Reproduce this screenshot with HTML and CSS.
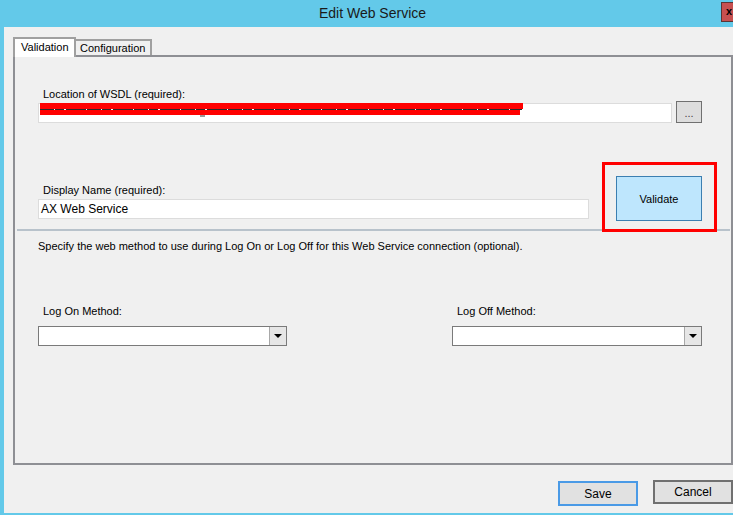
FILE: index.html
```html
<!DOCTYPE html>
<html lang="en">
<head>
    <meta charset="UTF-8">
    <meta name="viewport" content="width=device-width, initial-scale=1.0">
    <title>Edit Web Service</title>
    <link rel="stylesheet" href="styles.css">
</head>
<body>
    <div class="window">
        <div class="title-bar">
            <span class="title-text">Edit Web Service</span>
            <span class="close-btn">x</span>
        </div>
        <div class="dialog-body">
            <div class="tab-strip">
                <div class="tab tab-active">Validation</div>
                <div class="tab">Configuration</div>
            </div>
            <div class="tab-panel">
                <label class="field-label">Location of WSDL (required):</label>
                <div class="wsdl-row">
                    <div class="text-box wsdl-box"></div>
                    <button class="browse-btn" type="button">...</button>
                </div>

                <div class="name-row">
                    <div class="name-col">
                        <label class="field-label">Display Name (required):</label>
                        <div class="text-box name-box">AX Web Service</div>
                    </div>
                    <button class="validate-btn" type="button">Validate</button>
                </div>

                <div class="separator"></div>
                <p class="hint">Specify the web method to use during Log On or Log Off for this Web Service connection (optional).</p>

                <div class="method-row">
                    <div class="method-col">
                        <label class="field-label">Log On Method:</label>
                        <div class="combo"><span class="combo-text"></span><span class="combo-arrow"></span></div>
                    </div>
                    <div class="method-col method-off">
                        <label class="field-label">Log Off Method:</label>
                        <div class="combo"><span class="combo-text"></span><span class="combo-arrow"></span></div>
                    </div>
                </div>
            </div>
            <div class="footer">
                <button class="dlg-btn btn-save" type="button">Save</button>
                <button class="dlg-btn btn-cancel" type="button">Cancel</button>
            </div>
        </div>

        <!-- annotations drawn over the dialog -->
        <svg class="redaction" width="486" height="14" viewBox="0 0 486 14">
            <rect x="0" y="0" width="483" height="6" fill="#ff0000"/>
            <line x1="0" y1="6.5" x2="482" y2="6.5" stroke="#2a2a2a" stroke-width="1" stroke-dasharray="14 1 9 2 20 1"/>
            <rect x="0" y="7" width="480" height="5" fill="#ff0000"/>
            <line x1="160" y1="13" x2="165" y2="13" stroke="#333" stroke-width="1"/>
        </svg>
        <div class="highlight-box"></div>
    </div>
</body>
</html>
```

FILE: styles.css
```css
body{
    margin:0px;
    padding:0px;
    background-color:#f0f0f0;
    font-family:"Liberation Sans", Arial, sans-serif;
    font-size:11px;
    color:#000000;
}

.window{
    position:relative;
    width:733px;
    height:515px;
    box-sizing:border-box;
    border-left:4px solid #63c9e9;
    border-bottom:2px solid #63c9e9;
    overflow:hidden;
    background-color:#f0f0f0;
}

.title-bar{
    height:27px;
    margin-left:-4px;
    padding-left:12px;
    background-color:#63c9e9;
    display:flex;
    align-items:center;
    justify-content:center;
}

.title-text{
    font-size:14px;
    color:#1a1a1a;
    margin-top:-1px;
}

.close-btn{
    position:absolute;
    top:2px;
    left:717px;
    width:40px;
    height:20px;
    box-sizing:border-box;
    border:1px solid #5b3434;
    background-color:#c75050;
    font-size:11px;
    font-weight:bold;
    line-height:17px;
    padding-left:4px;
}

.dialog-body{
    padding-left:9px;
    padding-top:10px;
}

.tab-strip{
    display:flex;
    align-items:flex-end;
    height:18px;
}

.tab{
    box-sizing:border-box;
    height:16px;
    padding:0px 4px 0px 4px;
    border:1px solid #a0a0a0;
    border-bottom:none;
    line-height:15px;
    background-color:#f0f0f0;
}

.tab-active{
    position:relative;
    z-index:2;
    height:20px;
    width:63px;
    margin-bottom:-2px;
    padding-left:6px;
    border:2px solid #a0a0a0;
    border-bottom:none;
    background-color:#ffffff;
    line-height:17px;
}

.tab-active + .tab{
    width:76px;
    border-left:none;
    border-width:2px;
    line-height:14px;
}

.tab-panel{
    position:relative;
    box-sizing:border-box;
    width:720px;
    height:410px;
    border:2px solid #8e8f94;
    padding-left:23px;
    padding-top:31px;
}

.field-label{
    display:block;
    height:13px;
    line-height:13px;
    padding-left:5px;
}

.text-box{
    box-sizing:border-box;
    height:20px;
    background-color:#ffffff;
    border:1px solid #dcdcdc;
    line-height:18px;
    padding-left:2px;
    font-size:12px;
}

.wsdl-row{
    display:flex;
    align-items:flex-end;
    height:22px;
}

.wsdl-box{
    width:634px;
}

.browse-btn{
    box-sizing:border-box;
    width:26px;
    height:22px;
    margin-left:4px;
    padding:0px;
    border:1px solid #707070;
    background-color:#dddddd;
    font-family:"Liberation Sans", Arial, sans-serif;
    font-size:11px;
    line-height:22px;
    color:#444444;
}

.name-row{
    display:flex;
    margin-top:53px;
    height:45px;
}

.name-col{
    width:551px;
    padding-top:8px;
}

.name-box{
    margin-top:2px;
}

.validate-btn{
    box-sizing:border-box;
    width:86px;
    height:45px;
    margin-left:27px;
    border:1px solid #3c7fb1;
    background-color:#bee6fd;
    font-family:"Liberation Sans", Arial, sans-serif;
    font-size:11px;
    color:#000000;
}

.separator{
    margin-top:8px;
    margin-left:-21px;
    width:713px;
    height:2px;
    background-color:#b8c2cb;
}

.hint{
    margin:9px 0px 0px 0px;
    line-height:13px;
}

.method-row{
    display:flex;
    margin-top:52px;
}

.method-col{
    width:249px;
}

.method-off{
    width:250px;
    margin-left:165px;
}

.combo{
    display:flex;
    box-sizing:border-box;
    height:20px;
    margin-top:8px;
    border:1px solid #7a7a7a;
    background-color:#ffffff;
}

.combo-text{
    flex:1;
}

.combo-arrow{
    position:relative;
    width:16px;
    border-left:1px solid #a8a8a8;
    background-color:#e6e6e6;
}

.combo-arrow::after{
    content:"";
    position:absolute;
    left:4px;
    top:7px;
    border-left:4px solid transparent;
    border-right:4px solid transparent;
    border-top:4px solid #000000;
}

.footer{
    display:flex;
    justify-content:flex-end;
    padding-top:15px;
    gap:15px;
}

.dlg-btn{
    box-sizing:border-box;
    width:80px;
    height:25px;
    background-color:#e1e1e1;
    font-family:"Liberation Sans", Arial, sans-serif;
    font-size:12px;
    color:#000000;
}

.btn-save{
    border:2px solid #4a9ae6;
    margin-top:1px;
}

.btn-cancel{
    border:2px solid #707070;
    height:24px;
}

.redaction{
    position:absolute;
    left:36px;
    top:103px;
}

.highlight-box{
    position:absolute;
    left:598px;
    top:162px;
    width:115px;
    height:70px;
    box-sizing:border-box;
    border:3px solid #ff0000;
}
```
